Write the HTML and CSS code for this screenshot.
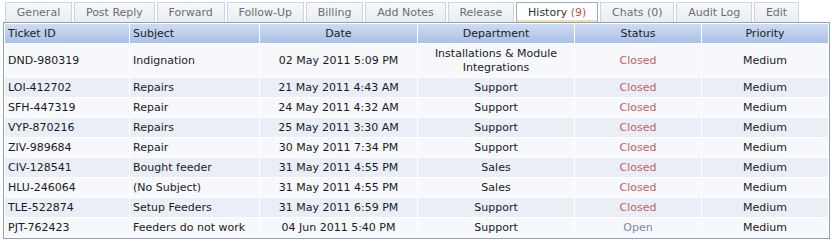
FILE: index.html
```html
<!DOCTYPE html>
<html>
<head>
<meta charset="utf-8">
<link rel="stylesheet" href="styles.css">
</head>
<body>
<div class="page">
  <ul class="tabs">
    <li class="tab">General</li>
    <li class="tab">Post Reply</li>
    <li class="tab">Forward</li>
    <li class="tab">Follow-Up</li>
    <li class="tab">Billing</li>
    <li class="tab">Add Notes</li>
    <li class="tab">Release</li>
    <li class="tab active">History <span class="count">(9)</span></li>
    <li class="tab">Chats (0)</li>
    <li class="tab">Audit Log</li>
    <li class="tab">Edit</li>
  </ul>
  <table class="grid">
    <colgroup>
      <col class="c-id"><col class="c-subj"><col class="c-date"><col class="c-dept"><col class="c-status"><col class="c-prio">
    </colgroup>
    <thead>
      <tr>
        <th class="left">Ticket ID</th>
        <th class="left">Subject</th>
        <th>Date</th>
        <th>Department</th>
        <th>Status</th>
        <th>Priority</th>
      </tr>
    </thead>
    <tbody>
      <tr class="odd"><td class="left">DND-980319</td><td class="left">Indignation</td><td>02 May 2011 5:09 PM</td><td>Installations &amp; Module Integrations</td><td class="closed">Closed</td><td>Medium</td></tr>
      <tr class="even"><td class="left">LOI-412702</td><td class="left">Repairs</td><td>21 May 2011 4:43 AM</td><td>Support</td><td class="closed">Closed</td><td>Medium</td></tr>
      <tr class="odd"><td class="left">SFH-447319</td><td class="left">Repair</td><td>24 May 2011 4:32 AM</td><td>Support</td><td class="closed">Closed</td><td>Medium</td></tr>
      <tr class="even"><td class="left">VYP-870216</td><td class="left">Repairs</td><td>25 May 2011 3:30 AM</td><td>Support</td><td class="closed">Closed</td><td>Medium</td></tr>
      <tr class="odd"><td class="left">ZIV-989684</td><td class="left">Repair</td><td>30 May 2011 7:34 PM</td><td>Support</td><td class="closed">Closed</td><td>Medium</td></tr>
      <tr class="even"><td class="left">CIV-128541</td><td class="left">Bought feeder</td><td>31 May 2011 4:55 PM</td><td>Sales</td><td class="closed">Closed</td><td>Medium</td></tr>
      <tr class="odd"><td class="left">HLU-246064</td><td class="left">(No Subject)</td><td>31 May 2011 4:55 PM</td><td>Sales</td><td class="closed">Closed</td><td>Medium</td></tr>
      <tr class="even"><td class="left">TLE-522874</td><td class="left">Setup Feeders</td><td>31 May 2011 6:59 PM</td><td>Support</td><td class="closed">Closed</td><td>Medium</td></tr>
      <tr class="odd"><td class="left">PJT-762423</td><td class="left">Feeders do not work</td><td>04 Jun 2011 5:40 PM</td><td>Support</td><td class="open">Open</td><td>Medium</td></tr>
    </tbody>
  </table>
</div>
</body>
</html>
```
FILE: styles.css
```css
html, body {
  margin: 0;
  padding: 0;
  background: #ffffff;
}

.page {
  font-family: "DejaVu Sans", Verdana, sans-serif;
  font-size: 11px;
  color: #1a1a1a;
  padding-top: 2px;
}

.tabs {
  list-style: none;
  margin: 0;
  padding: 0 0 0 5px;
  display: flex;
  gap: 2px;
  height: 20px;
}

.tab {
  box-sizing: border-box;
  height: 20px;
  padding: 1px 10.85px 0;
  border: 1px solid #c9d5e1;
  border-bottom: none;
  background: linear-gradient(#f6f8fa, #e9eef3);
  color: #6d6d6d;
  line-height: 18px;
  white-space: nowrap;
}

.tab.active {
  background: #ffffff;
  border-color: #95b0c6;
  color: #333;
  box-shadow: inset 0 -2px 0 #f2dbb5;
}

.tab .count {
  color: #c0504d;
}

.grid {
  box-sizing: border-box;
  margin-left: 3px;
  width: 826px;
  table-layout: fixed;
  border: 1px solid #8aa3bb;
  border-spacing: 1px;
  background: #ffffff;
}

.c-id { width: 124px; }
.c-subj { width: 129px; }
.c-date { width: 157px; }
.c-dept { width: 156px; }
.c-status { width: 126px; }
.c-prio { width: 126px; }

.grid th,
.grid td {
  box-sizing: border-box;
  padding: 3px 3px 2px;
  line-height: 14px;
  text-align: center;
  font-weight: normal;
  vertical-align: middle;
}

.grid th {
  background: linear-gradient(#cfdcf1, #a9c1e7);
  color: #222;
}

.grid .left {
  text-align: left;
}

.grid tr.odd td {
  background: #f6f8fc;
}

.grid tr.even td {
  background: #eaeff7;
}

.grid td.closed {
  color: #c4605c;
}

.grid td.open {
  color: #7a88a0;
}
```
